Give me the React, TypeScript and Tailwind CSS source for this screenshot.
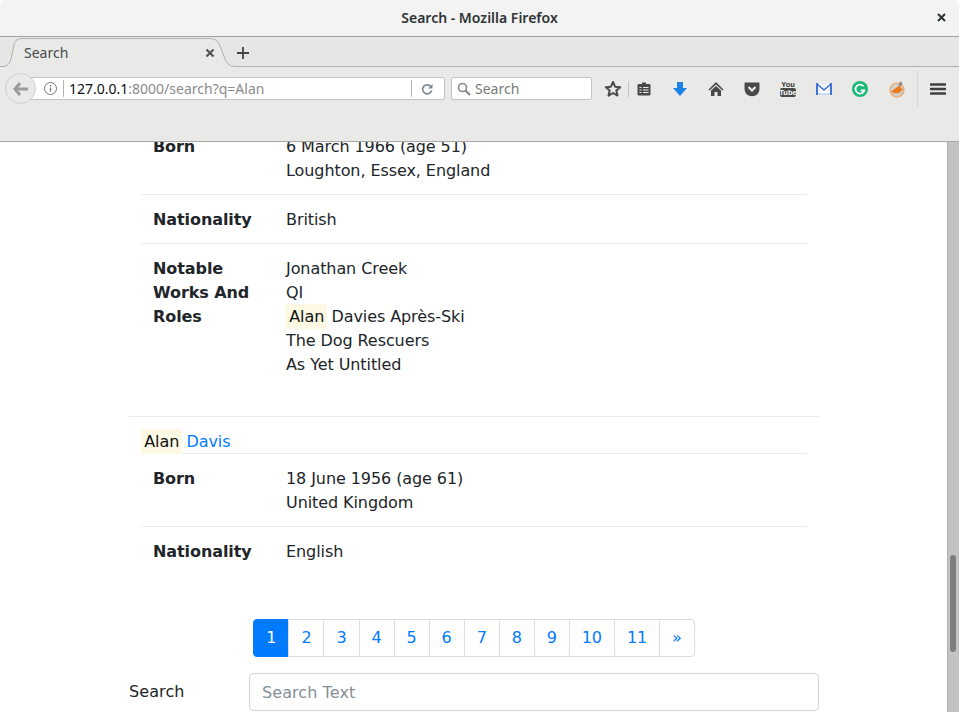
const BrowserChrome = () => (
  <div className="font-['Noto_Sans',sans-serif] text-[#2e3436]">
    <div className="relative flex h-[37px] items-center justify-center rounded-t-[6px] border-b border-[#a3a3a1] bg-[#f3f3f3]">
      <span className="text-[14px] font-semibold leading-none">Search - Mozilla Firefox</span>
      <svg className="absolute right-[12px] top-[12px]" width="11" height="11" viewBox="0 0 11 11">
        <path d="M2 2l7 7M9 2l-7 7" stroke="#2e3436" strokeWidth="2" />
      </svg>
    </div>

    <div className="relative flex h-[30px] items-center bg-[#e6e6e5] pt-[2px]">
      <svg className="absolute left-0 top-0" width="959" height="30" viewBox="0 0 959 30">
        <path d="M0 30H3C9 30 11 24 12 17L14 8C15 3 18 1.500 23 1.500H208C214 1.500 218 3 220 9L225 22C227 27 230 30 236 30" fill="#e9e9e8" stroke="none" />
        <path d="M0 29.500H3C9 29.500 11 24 12 17L14 8C15 3 18 1.500 23 1.500H208C214 1.500 218 3 220 9L225 22C227 27 230 29.500 236 29.500H959" fill="none" stroke="#b0b0ae" />
      </svg>
      <span className="relative ml-[24px] w-[181px] text-[14px] leading-none text-[#454a4c]">Search</span>
      <svg className="relative" width="10" height="10" viewBox="0 0 10 10">
        <path d="M1.500 1.500l7 7M8.500 1.500l-7 7" stroke="#555" strokeWidth="2.200" />
      </svg>
      <svg className="relative ml-[21px]" width="14" height="14" viewBox="0 0 14 14">
        <path d="M7 1v12M1 7h12" stroke="#444" strokeWidth="1.800" />
      </svg>
    </div>

    <div className="relative h-[75px] border-b border-[#a9a9a7] bg-[#e9e9e8]">
      <div className="flex h-[43px] items-center pl-[5px]">
        <div className="z-10 flex size-[31px] items-center justify-center rounded-full border border-[#cfcfce] bg-[#e9e9e8]">
          <svg width="16" height="14" viewBox="0 0 16 14">
            <path d="M7 1L2 7l5 6M2.500 7H15" fill="none" stroke="#9b9b9b" strokeWidth="3" />
          </svg>
        </div>
        <div className="-ml-[5px] flex h-[23px] w-[414px] items-center rounded-r-[2px] border border-[#c3c3c2] bg-white pl-[11px] text-[14px]">
          <svg width="15" height="15" viewBox="0 0 15 15">
            <circle cx="7.500" cy="7.500" r="6" fill="none" stroke="#777" />
            <path d="M7.500 6.500v4M7.500 4v1.500" stroke="#777" strokeWidth="1.300" />
          </svg>
          <span className="ml-[5px] h-[17px] w-px bg-[#b5b5b5]" />
          <span className="ml-[5px] w-[342px] leading-none text-[#8a8a8a]">
            <span className="text-[#111]">127.0.0.1</span>:8000/search?q=Alan
          </span>
          <span className="h-[17px] w-px bg-[#b5b5b5]" />
          <svg className="ml-[9px]" width="12" height="12" viewBox="0 0 12 12">
            <path d="M10 4A4.500 4.500 0 1 0 10.500 7.500" fill="none" stroke="#7d8a92" strokeWidth="1.700" />
            <path d="M11.500 1v4.500H7z" fill="#7d8a92" />
          </svg>
        </div>
        <div className="ml-[6px] flex h-[23px] w-[141px] items-center rounded-[2px] border border-[#c3c3c2] bg-white pl-[4px] text-[14px] leading-none text-[#7a7a7a]">
          <svg width="16" height="16" viewBox="0 0 16 16">
            <circle cx="6.500" cy="6.500" r="4" fill="none" stroke="#888" strokeWidth="1.600" />
            <path d="M9.500 9.500l4.500 4.500" stroke="#888" strokeWidth="2.200" />
          </svg>
          <span className="ml-[3px]">Search</span>
        </div>
        <ToolbarIcons />
      </div>
    </div>
  </div>
)

const ToolbarIcons = () => (
  <div className="flex items-center">
    <svg className="ml-[12px]" width="18" height="18" viewBox="0 0 18 18">
      <path d="M9 2l2.100 4.700 5.100.5-3.900 3.400 1.200 5L9 13l-4.500 2.600 1.200-5L1.800 7.200l5.100-.5z" fill="none" stroke="#4a4a4a" strokeWidth="2" strokeLinejoin="round" />
    </svg>
    <span className="ml-[6px] h-[16px] w-px bg-[#c4c4c3]" />
    <svg className="ml-[7px]" width="16" height="16" viewBox="0 0 16 16">
      <path d="M3 3h3V1.500h4V3h3c1 0 1.500.5 1.500 1.500V13c0 1-.5 1.500-1.500 1.500H3c-1 0-1.500-.5-1.500-1.500V4.500C1.500 3.500 2 3 3 3z" fill="#4a4a4a" />
      <path d="M3.500 6.500h2M7 6.500h5.500M3.500 9h2M7 9h5.500M3.500 11.500h2M7 11.500h5.500" stroke="#e9e9e8" strokeWidth="1.100" />
    </svg>
    <svg className="ml-[20px]" width="16" height="16" viewBox="0 0 16 16">
      <path d="M5 1h6v6h4l-7 8-7-8h4z" fill="#1e83e8" />
    </svg>
    <svg className="ml-[20px]" width="16" height="16" viewBox="0 0 16 16">
      <path d="M8 1L0.500 8.500l1 1L8 3.500l6.500 6 1-1z" fill="#4a4a4a" />
      <path d="M8 5l-5 4.500V15h3.500v-4h3v4H13V9.500z" fill="#4a4a4a" />
    </svg>
    <svg className="ml-[20px]" width="16" height="16" viewBox="0 0 16 16">
      <path d="M1.500 1.500h13c.6 0 1 .4 1 1V8a7.500 7.300 0 0 1-15 0V2.500c0-.6.400-1 1-1z" fill="#4a4a4a" />
      <path d="M4.500 6L8 9.500 11.500 6" fill="none" stroke="#e9e9e8" strokeWidth="2.200" />
    </svg>
    <svg className="ml-[20px]" width="16" height="17" viewBox="0 0 16 17">
      <text x="8" y="6.500" textAnchor="middle" fontFamily="'Liberation Sans',sans-serif" fontSize="7.500" fontWeight="700" fill="#333">You</text>
      <rect x="0" y="8" width="16" height="9" rx="2" fill="#4a4a4a" />
      <text x="8" y="15" textAnchor="middle" fontFamily="'Liberation Sans',sans-serif" fontSize="7.500" fontWeight="700" fill="#fff">Tube</text>
    </svg>
    <svg className="ml-[20px]" width="16" height="12" viewBox="0 0 16 12">
      <rect x="1" y="1" width="14" height="10" fill="#f6f8fc" />
      <path d="M1 1l7 6 7-6" fill="none" stroke="#3f73dc" strokeWidth="1.600" />
      <path d="M1 0v12M15 0v12" stroke="#3f73dc" strokeWidth="2" />
      <path d="M2 11h12" stroke="#a9c4f2" strokeWidth="1" />
    </svg>
    <svg className="ml-[20px]" width="16" height="16" viewBox="0 0 16 16">
      <circle cx="8" cy="8" r="8" fill="#1bb978" />
      <path d="M11.500 5.200A4.500 4.500 0 1 0 12.300 9.500H8.800" fill="none" stroke="#fff" strokeWidth="1.800" />
    </svg>
    <svg className="ml-[20px]" width="18" height="18" viewBox="0 0 18 18">
      <circle cx="9" cy="10" r="7" fill="#d4d0ca" stroke="#eaa35c" strokeWidth="1.200" />
      <path d="M3 11.500l5-3.500 4-3 1 3 2 1.500-4 3.500-4 .5z" fill="#ea7a1f" />
      <path d="M10 5l3-4 1.500 3-2 2z" fill="#8a8a8a" />
    </svg>
    <span className="ml-[11px] h-[36px] w-px bg-[#d6d6d5]" />
    <svg className="ml-[12px]" width="16" height="14" viewBox="0 0 16 14">
      <path d="M1 2.500h14M1 7h14M1 11.500h14" stroke="#3f3f3f" strokeWidth="2.600" strokeLinecap="round" />
    </svg>
  </div>
)

const Hit = ({ children }: { children: string }) => (
  <mark className="-mr-px bg-[#fcf8e3] p-[3.2px] text-[#111]">{children}</mark>
)

const Row = ({ label, children, first }: { label: string; children: React.ReactNode; first?: boolean }) => (
  <div className={`flex pt-[13px] pb-[11px] ${first ? '' : 'border-t border-[#e9ecef]'}`}>
    <div className="w-[133px] shrink-0 pl-[12px] pr-[12px] font-bold tracking-[-0.08px]">{label}</div>
    <div className="pl-[12px] tracking-[-0.08px]">{children}</div>
  </div>
)

const Pagination = () => (
  <div className="flex justify-center tracking-[-0.14px]">
    <a className="rounded-l-[4px] border border-[#007bff] bg-[#007bff] px-[12px] py-[8px] leading-[20px] text-white">1</a>
    {['2', '3', '4', '5', '6', '7', '8', '9', '10', '11'].map((page) => (
      <a key={page} className="-ml-px border border-[#ddd] px-[12px] py-[8px] leading-[20px] text-[#007bff]">
        {page}
      </a>
    ))}
    <a className="-ml-px rounded-r-[4px] border border-[#ddd] px-[12px] py-[8px] leading-[20px] text-[#007bff]">»</a>
  </div>
)

const App = () => (
  <div className="flex h-[712px] w-[959px] flex-col overflow-hidden bg-white">
    <BrowserChrome />
    <div className="flex min-h-0 flex-1">
      <div className="min-w-0 flex-1 overflow-hidden font-['DejaVu_Sans',sans-serif] text-[16px] leading-[24px] text-[#212529]">
        <div className="ml-[129px] -mt-[20px] w-[690px]">
          <div className="ml-[12px] w-[666px]">
            <Row label="Born" first>
              6 March 1966 (age 51)<br />Loughton, Essex, England
            </Row>
            <Row label="Nationality">British</Row>
            <Row label="Notable Works And Roles">
              Jonathan Creek<br />QI<br />
              <Hit>Alan</Hit> Davies Après-Ski<br />The Dog Rescuers<br />As Yet Untitled
            </Row>
          </div>

          <div className="mt-[28px] border-t border-[#e9ecef] pt-[13px]">
            <div className="-mb-px pl-[12px] tracking-[-0.08px]">
              <Hit>Alan</Hit> <a className="text-[#007bff]">Davis</a>
            </div>
            <div className="ml-[12px] w-[666px] border-t border-[#e9ecef]">
              <Row label="Born" first>
                18 June 1956 (age 61)<br />United Kingdom
              </Row>
              <Row label="Nationality">English</Row>
            </div>
          </div>

          <div className="mt-[44px]">
            <Pagination />
          </div>

          <div className="mt-[16px] flex items-center">
            <label className="w-[120px] shrink-0 tracking-[0.1px]">Search</label>
            <input
              placeholder="Search Text"
              className="h-[38px] w-[570px] rounded-[4px] border border-[#ced4da] px-[12px] tracking-[0.08px] placeholder:text-[#868e96]"
            />
          </div>
        </div>
      </div>
      <div className="w-[12px] shrink-0 border-l border-[#b0b0ae] bg-[#c2c3c2] pl-[2px] pt-[413px]">
        <div className="h-[97px] w-[6px] rounded-full bg-[#7c7f7f]" />
      </div>
    </div>
  </div>
)

export default App
